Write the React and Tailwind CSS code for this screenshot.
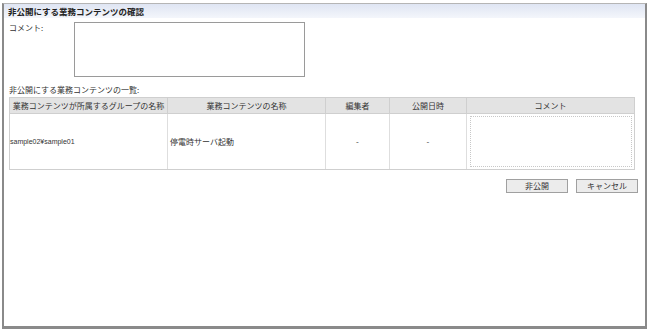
export default function App() {
  const font = { fontFamily: '"Noto Sans CJK JP", "Liberation Sans", sans-serif' };
  return (
    <div className="w-[649px] h-[331px] bg-white pt-[3px] pl-[2px]" style={font}>
      <div className="w-[645px] h-[326px] border-l-2 border-r-2 border-b-[3px] border-t border-[#8a8a8a] border-t-[#b5b5b5] flex flex-col text-[#333]">
        <div className="h-[14px] bg-gradient-to-b from-[#dfe5f3] to-[#f4f6fb] flex items-center pl-[4px] text-[8.5px] font-bold leading-none text-[#222]">
          非公開にする業務コンテンツの確認
        </div>
        <div className="flex pl-[5px] pt-[4px]">
          <div className="w-[65px] text-[8px] leading-none pt-[2px]">コメント:</div>
          <div className="w-[231px] h-[55px] border border-[#9a9a9a]"></div>
        </div>
        <div className="pl-[5px] pt-[9px] text-[8px] leading-none">非公開にする業務コンテンツの一覧:</div>
        <div className="pl-[5px] pt-[3px]">
          <div className="w-[626px] border border-[#cfcfcf] text-[8px] leading-none">
            <div className="flex h-[16px] bg-[#e3e3e3] border-b border-[#cfcfcf]">
              <div className="w-[158px] border-r border-[#cfcfcf] flex items-center justify-center">業務コンテンツが所属するグループの名称</div>
              <div className="w-[158px] border-r border-[#cfcfcf] flex items-center justify-center">業務コンテンツの名称</div>
              <div className="w-[64px] border-r border-[#cfcfcf] flex items-center justify-center">編集者</div>
              <div className="w-[77px] border-r border-[#cfcfcf] flex items-center justify-center">公開日時</div>
              <div className="flex-1 flex items-center justify-center">コメント</div>
            </div>
            <div className="flex h-[55px]">
              <div className="w-[158px] border-r border-[#dedede] flex items-center text-[7px] text-[#333]" style={{ fontFamily: '"Liberation Sans", sans-serif' }}>sample02¥sample01</div>
              <div className="w-[158px] border-r border-[#dedede] flex items-center pl-[2px]">停電時サーバ起動</div>
              <div className="w-[64px] border-r border-[#dedede] flex items-center justify-center">-</div>
              <div className="w-[77px] border-r border-[#dedede] flex items-center justify-center">-</div>
              <div className="flex-1 p-[2px] pl-[3px]">
                <div className="w-full h-full border border-dotted border-[#c8c8c8]"></div>
              </div>
            </div>
          </div>
        </div>
        <div className="flex justify-end gap-[8px] pr-[7px] pt-[9px] text-[8px] leading-none">
          <button className="w-[62px] h-[14px] border border-[#a0a0a0] bg-[#ececec] flex items-center justify-center">非公開</button>
          <button className="w-[62px] h-[14px] border border-[#a0a0a0] bg-[#ececec] flex items-center justify-center">キャンセル</button>
        </div>
      </div>
    </div>
  );
}
